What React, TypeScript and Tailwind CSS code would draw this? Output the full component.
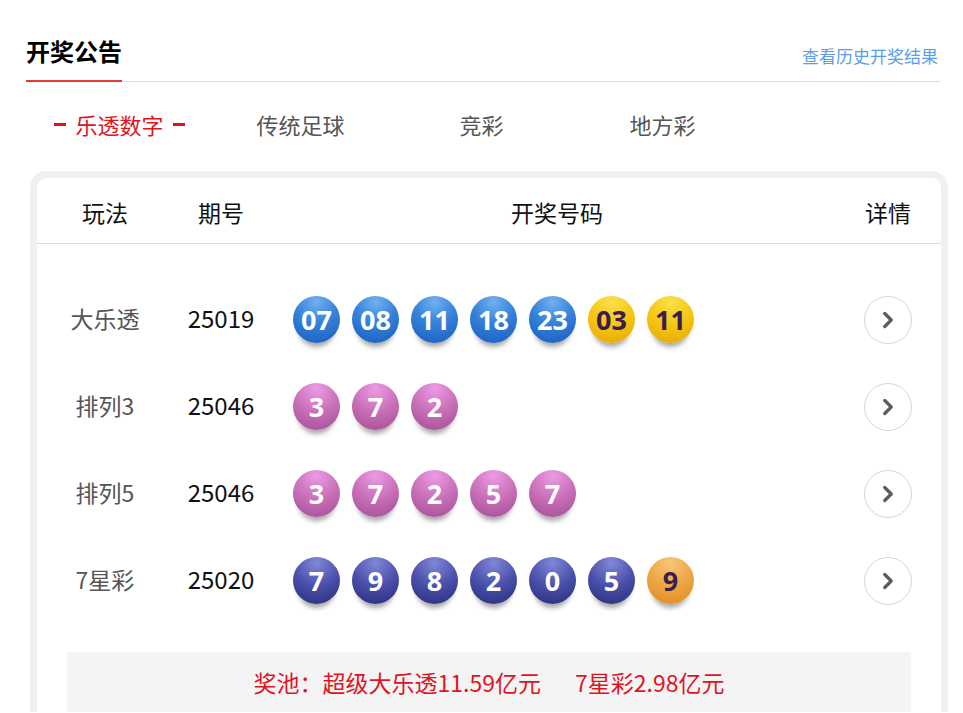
import { ChevronRight } from "lucide-react";

type Tone = "blue" | "yellow" | "pink" | "navy" | "orange";

const toneClasses: Record<Tone, string> = {
  blue: "bg-[radial-gradient(circle_at_50%_12%,#72b0f0_0%,#3482da_45%,#1a5cbd_100%)] text-white",
  yellow: "bg-[radial-gradient(circle_at_50%_12%,#fbe04a_0%,#f5c611_50%,#e6a504_100%)] text-[#3b1d4f]",
  pink: "bg-[radial-gradient(circle_at_50%_12%,#ec9ae4_0%,#c86fb8_50%,#a24d93_100%)] text-white",
  navy: "bg-[radial-gradient(circle_at_50%_12%,#8088d8_0%,#4a50aa_50%,#282c78_100%)] text-white",
  orange: "bg-[radial-gradient(circle_at_50%_12%,#f7c679_0%,#eda644_50%,#de8a1e_100%)] text-[#3b1d4f]",
};

const draws: { name: string; issue: string; balls: [string, Tone][] }[] = [
  {
    name: "大乐透",
    issue: "25019",
    balls: [
      ["07", "blue"],
      ["08", "blue"],
      ["11", "blue"],
      ["18", "blue"],
      ["23", "blue"],
      ["03", "yellow"],
      ["11", "yellow"],
    ],
  },
  {
    name: "排列3",
    issue: "25046",
    balls: [
      ["3", "pink"],
      ["7", "pink"],
      ["2", "pink"],
    ],
  },
  {
    name: "排列5",
    issue: "25046",
    balls: [
      ["3", "pink"],
      ["7", "pink"],
      ["2", "pink"],
      ["5", "pink"],
      ["7", "pink"],
    ],
  },
  {
    name: "7星彩",
    issue: "25020",
    balls: [
      ["7", "navy"],
      ["9", "navy"],
      ["8", "navy"],
      ["2", "navy"],
      ["0", "navy"],
      ["5", "navy"],
      ["9", "orange"],
    ],
  },
];

const tabs = ["乐透数字", "传统足球", "竞彩", "地方彩"];

function Ball({ value, tone }: { value: string; tone: Tone }) {
  return (
    <span
      className={`grid size-[47px] place-items-center rounded-full text-[27px] font-bold leading-none shadow-[0_9px_5px_-5px_rgba(0,0,0,0.35)] ${toneClasses[tone]}`}
    >
      {value}
    </span>
  );
}

export default function App() {
  return (
    <div className="min-h-[713px] overflow-hidden bg-white pl-[26px] pr-[23px] pt-[35px] font-['Noto_Sans_CJK_SC','Noto_Sans',sans-serif]">
      <div className="flex items-end justify-between border-b border-[#dddddd]">
        <h1 className="-mb-px border-b-2 border-[#e53935] pb-[13px] text-[24px] font-bold leading-[32px] text-black">
          开奖公告
        </h1>
        <a className="mb-[13px] mr-[2px] text-[17px] leading-[24px] text-[#5a9cec]">查看历史开奖结果</a>
      </div>

      <div className="mt-[27px] flex pl-[3px]">
        {tabs.map((tab, i) => (
          <div key={tab} className="flex w-[181px] items-center justify-center gap-[9px]">
            {i === 0 && <span className="h-[3px] w-[12px] bg-[#e0141e]" />}
            <span
              className={`text-[22px] leading-[30px] ${i === 0 ? "text-[#e0141e]" : "text-[#555555]"}`}
            >
              {tab}
            </span>
            {i === 0 && <span className="h-[3px] w-[12px] bg-[#e0141e]" />}
          </div>
        ))}
      </div>

      <div className="ml-[4px] mt-[32px] w-[918px] rounded-t-[16px] border-x-[7px] border-t-[7px] border-[#f0f0f0] bg-white">
        <div className="flex h-[66px] items-center border-b border-[#dcdcdc] pt-[3px] text-[23px] text-[#111111]">
          <div className="w-[136px] text-center">玩法</div>
          <div className="w-[96px] text-center">期号</div>
          <div className="flex-1 pl-[10px] text-center">开奖号码</div>
          <div className="w-[106px] text-center">详情</div>
        </div>

        <div className="pt-[32px]">
          {draws.map((d) => (
            <div key={d.name} className="flex h-[87px] items-center">
              <div className="w-[136px] pb-[3px] text-center text-[23px] text-[#555555]">{d.name}</div>
              <div className="w-[96px] pb-[3px] text-center text-[24px] text-[#111111]">{d.issue}</div>
              <div className="flex flex-1 gap-[12px] pl-[24px] font-['Open_Sans','Noto_Sans',sans-serif]">
                {d.balls.map(([v, t], i) => (
                  <Ball key={i} value={v} tone={t} />
                ))}
              </div>
              <div className="flex w-[106px] justify-center">
                <span className="grid size-[48px] place-items-center rounded-full border border-[#d6d6d6]">
                  <ChevronRight className="size-[26px] text-[#5c5c5c]" strokeWidth={3} />
                </span>
              </div>
            </div>
          ))}
        </div>

        <div className="mx-[30px] mt-[28px] flex h-[60px] items-center justify-center gap-[34px] bg-[#f4f4f4] text-[23px] text-[#e0141e]">
          <span>奖池：超级大乐透11.59亿元</span>
          <span>7星彩2.98亿元</span>
        </div>
      </div>
    </div>
  );
}
